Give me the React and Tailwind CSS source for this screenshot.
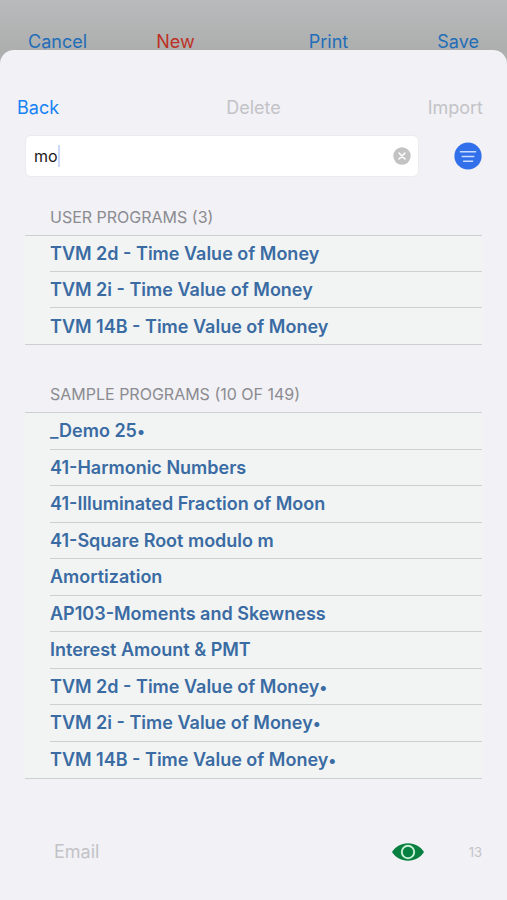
import { useState } from "react";

const SECTIONS = [
  {
    id: "user",
    title: "USER PROGRAMS (3)",
    listClass: "min-h-[110px]",
    programs: [
      { name: "TVM 2d - Time Value of Money" },
      { name: "TVM 2i - Time Value of Money" },
      { name: "TVM 14B - Time Value of Money" },
    ],
  },
  {
    id: "sample",
    title: "SAMPLE PROGRAMS (10 OF 149)",
    listClass: "min-h-[367px]",
    programs: [
      { name: "_Demo 25", marked: true },
      { name: "41-Harmonic Numbers" },
      { name: "41-Illuminated Fraction of Moon" },
      { name: "41-Square Root modulo m" },
      { name: "Amortization" },
      { name: "AP103-Moments and Skewness" },
      { name: "Interest Amount & PMT" },
      { name: "TVM 2d - Time Value of Money", marked: true },
      { name: "TVM 2i - Time Value of Money", marked: true },
      { name: "TVM 14B - Time Value of Money", marked: true },
    ],
  },
];

function ClearIcon() {
  return (
    <svg viewBox="0 0 18 18" className="size-[18px]" aria-hidden="true">
      <circle cx="9" cy="9" r="8.7" fill="#c3c3c4" />
      <path
        d="M6 6l6 6M12 6l-6 6"
        stroke="#fff"
        strokeWidth="1.5"
        strokeLinecap="round"
      />
    </svg>
  );
}

function FilterIcon() {
  return (
    <svg viewBox="0 0 28 28" className="size-7" aria-hidden="true">
      <circle cx="14" cy="14" r="13.6" fill="#3170ea" />
      <path
        d="M6.4 9.7h15.2M8.2 14.5h11.6M9.6 19.3h9"
        stroke="#c9dcff"
        strokeWidth="1.5"
        strokeLinecap="round"
      />
    </svg>
  );
}

function EyeIcon() {
  return (
    <svg viewBox="0 0 34 20" className="h-5 w-[34px]" aria-hidden="true">
      <path
        d="M1 10C4 5 10 1.3 17 1.3S30 5 33 10C30 15 24 18.7 17 18.7S4 15 1 10Z"
        fill="#08803f"
      />
      <circle cx="17" cy="10" r="6.2" fill="none" stroke="#c5efd5" strokeWidth="2" />
    </svg>
  );
}

function ProgramSection({ section }) {
  return (
    <section aria-labelledby={section.id}>
      <h2 id={section.id} className="pb-2 pl-[25px] text-base leading-5 text-[#8b8b90]">
        {section.title}
      </h2>
      <ul
        className={`grid auto-rows-fr border-y border-[#cdd0d1] bg-[#f1f4f3] pl-[25px] ${section.listClass}`}
      >
        {section.programs.map(({ name, marked }) => (
          <li key={name} className="flex border-b border-[#cdd0d1] last:border-b-0">
            <button
              type="button"
              className="flex-1 pt-px text-left text-lg font-semibold text-[#3a6ba3]"
            >
              {name}
              {marked && <span className="text-base leading-none">•</span>}
            </button>
          </li>
        ))}
      </ul>
    </section>
  );
}

export default function App() {
  const [query, setQuery] = useState("mo");

  return (
    <div className="flex min-h-screen flex-col bg-[#adafae] bg-linear-to-b from-[#b9babc] from-0% to-[#adafae] to-[50px] font-['Inter','Liberation_Sans',sans-serif]">
      <header className="flex justify-between px-7 pt-[30px] text-lg leading-6 text-[#1f6db8]">
        <button type="button">Cancel</button>
        <button type="button" className="mr-[45px] text-[#bd3026]">
          New
        </button>
        <button type="button" className="mr-5">
          Print
        </button>
        <button type="button">Save</button>
      </header>

      <main className="relative -mt-1 flex flex-1 flex-col rounded-t-[14px] bg-[#f1f1f6] pt-[46px]">
        <nav className="grid grid-cols-3 px-[17px] text-lg leading-6 text-[#c3c3c7]">
          <button type="button" className="text-left text-[#1682f5]">
            Back
          </button>
          <button type="button" disabled>
            Delete
          </button>
          <button type="button" disabled className="pr-[7px] text-right">
            Import
          </button>
        </nav>

        <div className="mt-[15px] flex items-center gap-[35px] px-[25px]">
          <div className="relative flex flex-1 items-center rounded-md border border-[#ececf0] bg-white pr-[7px]">
            <input
              type="text"
              aria-label="Search programs"
              value={query}
              onChange={(e) => setQuery(e.target.value)}
              className="h-10 min-w-0 flex-1 bg-transparent pl-2 text-base text-[#1a1a1a] outline-none"
            />
            <span className="absolute left-8 h-[22px] w-0.5 bg-[#ccd8f8]" />
            <button type="button" aria-label="Clear search" onClick={() => setQuery("")}>
              <ClearIcon />
            </button>
          </div>
          <button type="button" aria-label="Filter programs">
            <FilterIcon />
          </button>
        </div>

        <div className="mt-[30px] flex flex-col gap-[39px] px-[25px]">
          {SECTIONS.map((section) => (
            <ProgramSection key={section.id} section={section} />
          ))}
        </div>

        <footer className="mt-auto flex items-center pb-9 pl-[54px] pr-[25px] text-[#c3c3c7]">
          <button type="button" disabled className="text-lg leading-6">
            Email
          </button>
          <button type="button" aria-label="Preview" className="ml-auto mr-11">
            <EyeIcon />
          </button>
          <span className="text-[13px] leading-4">13</span>
        </footer>
      </main>
    </div>
  );
}
